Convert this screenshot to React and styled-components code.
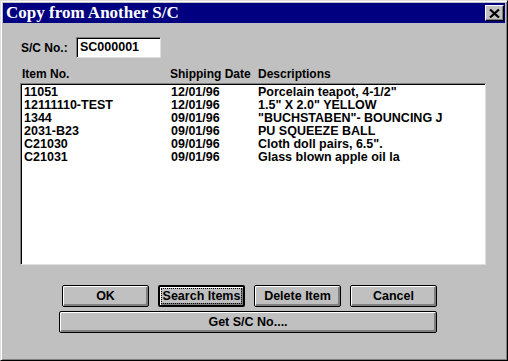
import styled, { createGlobalStyle } from "styled-components";

const GlobalStyles = createGlobalStyle`
  body {
    margin: 0;
    background: #c0c0c0;
  }
  * {
    box-sizing: border-box;
  }
`;

const items = [
  { no: "11051", date: "12/01/96", desc: 'Porcelain teapot, 4-1/2"' },
  { no: "12111110-TEST", date: "12/01/96", desc: '1.5" X 2.0" YELLOW' },
  { no: "1344", date: "09/01/96", desc: '"BUCHSTABEN"- BOUNCING J' },
  { no: "2031-B23", date: "09/01/96", desc: "PU SQUEEZE BALL" },
  { no: "C21030", date: "09/01/96", desc: 'Cloth doll pairs, 6.5".' },
  { no: "C21031", date: "09/01/96", desc: "Glass blown apple oil la" },
];

function App() {
  return (
    <>
      <GlobalStyles />
      <Window>
        <TitleBar>
          <Title>Copy from Another S/C</Title>
          <CloseButton>
            <svg width="11" height="9" viewBox="0 0 11 9">
              <path d="M1 0.5 L10 8.5 M10 0.5 L1 8.5" stroke="#000" strokeWidth="2.2" />
            </svg>
          </CloseButton>
        </TitleBar>
        <Content>
          <ScRow>
            <Label>S/C No.:</Label>
            <TextBox>SC000001</TextBox>
          </ScRow>
          <HeaderRow>
            <Cell>Item No.</Cell>
            <Cell>Shipping Date</Cell>
            <Cell>Descriptions</Cell>
          </HeaderRow>
          <ListBox>
            {items.map((it) => (
              <ListRow key={it.no}>
                <Cell>{it.no}</Cell>
                <Cell>{it.date}</Cell>
                <Cell>{it.desc}</Cell>
              </ListRow>
            ))}
          </ListBox>
          <ButtonRow>
            <Button>OK</Button>
            <Button $default>
              <Focus>Search Items</Focus>
            </Button>
            <Button>Delete Item</Button>
            <Button>Cancel</Button>
          </ButtonRow>
          <WideButton>Get S/C No....</WideButton>
        </Content>
      </Window>
    </>
  );
}

export default App;

const Window = styled.div`
  width: 508px;
  height: 361px;
  background: #c0c0c0;
  border-top: 1px solid #dfdfdf;
  border-left: 1px solid #dfdfdf;
  border-right: 1px solid #000;
  border-bottom: 1px solid #000;
  box-shadow: inset 1px 1px #fff, inset -1px -1px #808080;
  padding: 2px;
  font-family: "Liberation Sans", Arial, sans-serif;
  font-weight: bold;
  font-size: 12.5px;
  color: #000;
`;

const TitleBar = styled.div`
  height: 20px;
  background: #000080;
  display: flex;
  align-items: center;
  justify-content: space-between;
  padding: 0 1px 0 3px;
`;

const Title = styled.div`
  font-family: "Liberation Serif", "Times New Roman", serif;
  font-weight: bold;
  font-size: 17px;
  color: #fff;
  line-height: 20px;
`;

const CloseButton = styled.div`
  width: 19px;
  height: 16px;
  background: #c0c0c0;
  border-top: 1px solid #fff;
  border-left: 1px solid #fff;
  border-right: 1px solid #000;
  border-bottom: 1px solid #000;
  box-shadow: inset -1px -1px #808080;
  display: flex;
  align-items: center;
  justify-content: center;
`;

const Content = styled.div`
  padding: 14px 19px 0 17px;
`;

const ScRow = styled.div`
  display: flex;
  align-items: center;
  height: 21px;
`;

const Label = styled.div`
  width: 56px;
  padding-left: 1px;
  padding-top: 1px;
  font-size: 12px;
`;

const TextBox = styled.div`
  width: 85px;
  height: 21px;
  background: #fff;
  border-top: 1px solid #808080;
  border-left: 1px solid #808080;
  border-right: 1px solid #dfdfdf;
  border-bottom: 1px solid #dfdfdf;
  box-shadow: inset 1px 1px #000;
  padding: 2px 0 0 3px;
  line-height: 14px;
`;

const HeaderRow = styled.div`
  display: grid;
  grid-template-columns: 148px 88px 1fr;
  margin-top: 10px;
  padding-left: 2px;
  line-height: 13px;
  font-size: 12px;
`;

const Cell = styled.div`
  white-space: nowrap;
`;

const ListBox = styled.div`
  margin-top: 2px;
  height: 182px;
  background: #fff;
  border-top: 1px solid #808080;
  border-left: 1px solid #808080;
  border-right: 1px solid #dfdfdf;
  border-bottom: 1px solid #dfdfdf;
  box-shadow: inset 1px 1px #000;
  padding: 2px 0 0 3px;
`;

const ListRow = styled.div`
  display: grid;
  grid-template-columns: 147px 87px 1fr;
  line-height: 13px;
`;

const ButtonRow = styled.div`
  display: flex;
  gap: 9px;
  margin-top: 20px;
  padding-left: 42px;
`;

const Button = styled.div`
  width: 87px;
  height: 22px;
  background: #c0c0c0;
  border: ${({ $default }) => ($default ? "2px" : "1px")} solid #000;
  border-radius: 2px;
  box-shadow: inset 1px 1px #fff, inset -2px -2px #808080;
  display: flex;
  align-items: center;
  justify-content: center;
  line-height: 14px;
`;

const Focus = styled.span`
  outline: 1px dotted #000;
  outline-offset: 0;
  padding: 0 1px;
`;

const WideButton = styled(Button)`
  width: 378px;
  margin: 4px 0 0 39px;
`;
